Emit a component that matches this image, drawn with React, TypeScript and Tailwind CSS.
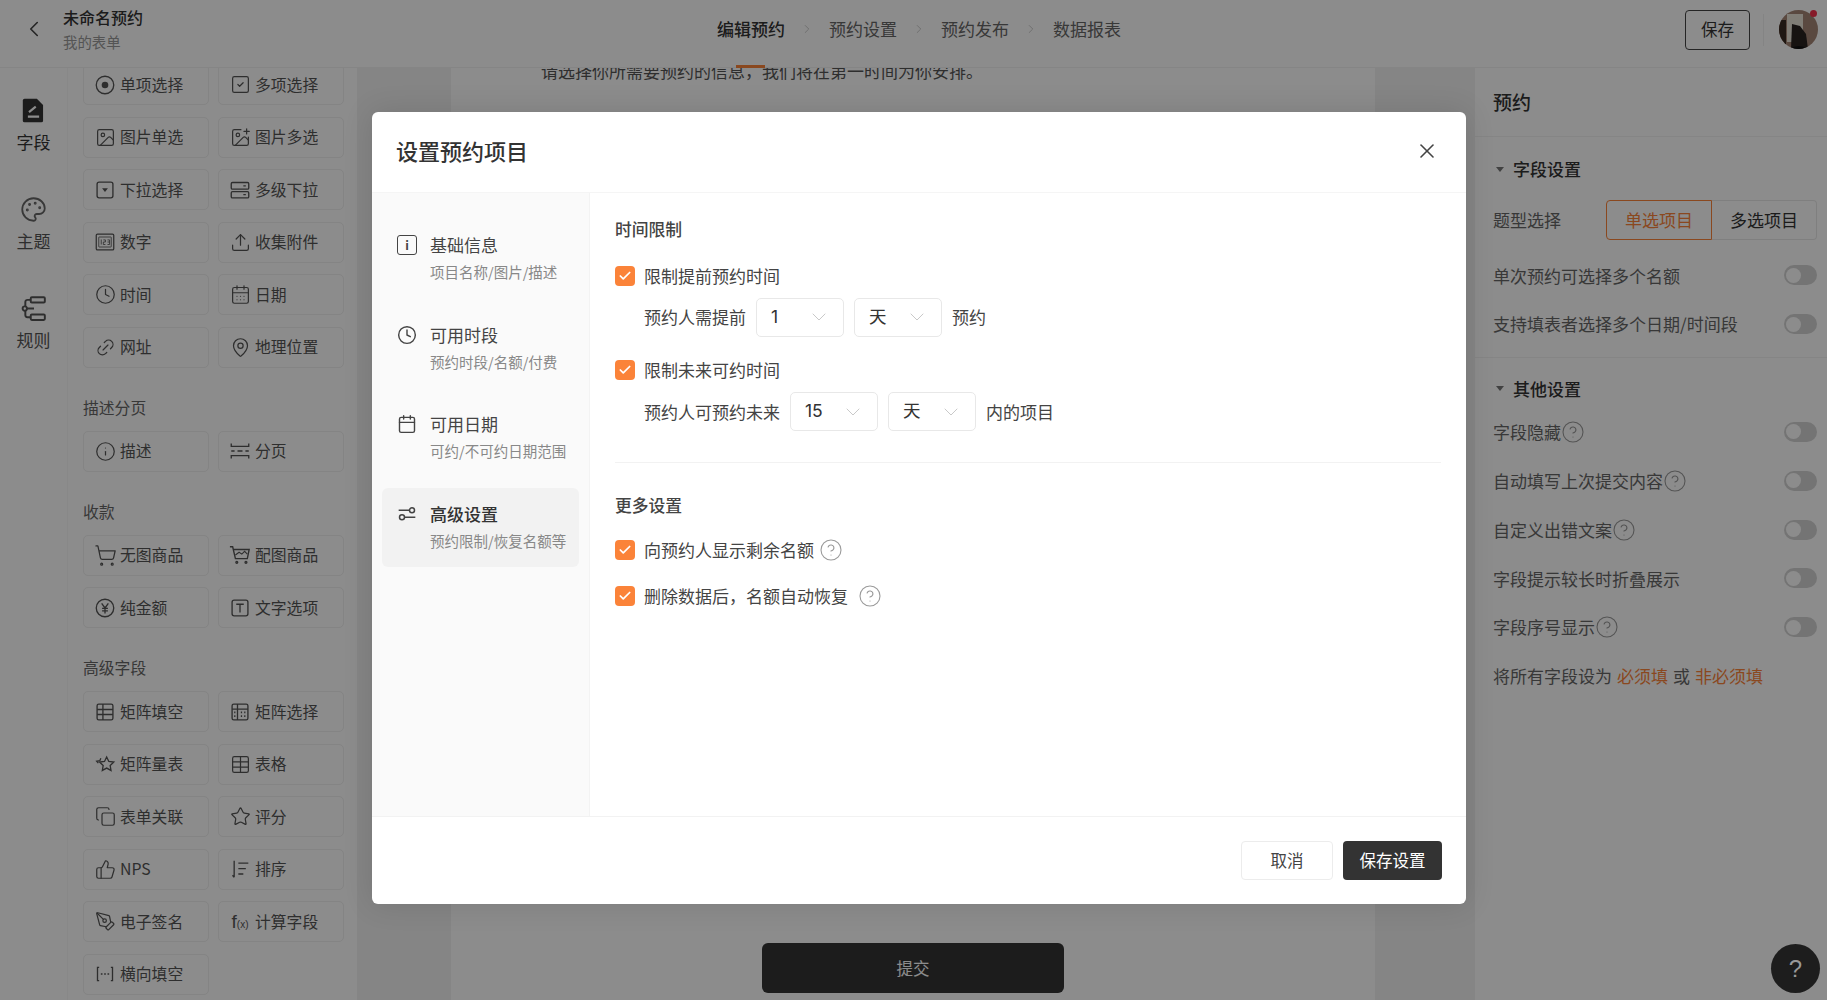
import type { ReactNode } from 'react';
import {
  ChevronLeft, ChevronRight, ChevronDown, X, SquareCheck, Image, ImagePlus,
  Upload, Clock, CalendarDays, Calendar, Link2, MapPin, Info, ShoppingCart,
  Star, Table, Copy, ThumbsUp, PenTool, Check, Palette, CircleHelp,
} from 'lucide-react';

const cn14 = '[font-family:"Noto_Sans_CJK_SC","Liberation_Sans",sans-serif]';
const svgIc = 'w-[20px] h-[20px] shrink-0';

function RadioDot() {
  return (
    <svg viewBox="0 0 24 24" className={svgIc} fill="none" stroke="currentColor" strokeWidth="1.6">
      <circle cx="12" cy="12" r="10.5" />
      <circle cx="12" cy="12" r="4" fill="currentColor" stroke="none" />
    </svg>
  );
}

function DropBox() {
  return (
    <svg viewBox="0 0 24 24" className={svgIc} fill="none" stroke="currentColor" strokeWidth="1.6">
      <rect x="2.5" y="2.5" width="19" height="19" rx="2.5" />
      <path d="M8.5 10h7L12 14.5z" fill="currentColor" stroke="none" />
    </svg>
  );
}

function Rows2() {
  return (
    <svg viewBox="0 0 24 24" className={svgIc} fill="none" stroke="currentColor" strokeWidth="1.6">
      <rect x="1.5" y="3" width="21" height="8" rx="1.5" />
      <rect x="1.5" y="14" width="21" height="7.5" rx="1.5" />
      <path d="M16 7h3M16 17.5h3" />
    </svg>
  );
}

function NumberBox() {
  return (
    <svg viewBox="0 0 24 24" className={svgIc} fill="none" stroke="currentColor" strokeWidth="1.5">
      <rect x="1.5" y="2.5" width="21" height="19" rx="1.5" />
      <rect x="4.5" y="6" width="15" height="12" rx="0.5" strokeWidth="1" />
      <path d="M7.5 9v6M10 9.5h2.5v2.500h-2.500v3h2.500M15 9.500h2.500v5.500H15M15 12h2.500" strokeWidth="1" />
    </svg>
  );
}

function PageBreak() {
  return (
    <svg viewBox="0 0 24 24" className="w-[22px] h-[20px] shrink-0" fill="none" stroke="currentColor" strokeWidth="1.6">
      <path d="M1.500 3v3.500h21V3M1.500 21v-3.500h21V21M1.500 12h4M9 12h6M18.500 12h4" />
    </svg>
  );
}

function YenCircle() {
  return (
    <svg viewBox="0 0 24 24" className={svgIc} fill="none" stroke="currentColor" strokeWidth="1.6">
      <circle cx="12" cy="12" r="10.5" />
      <path d="M8 6.500l4 5.500 4-5.500M12 12v6.500M8.500 12.500h7M8.500 15.500h7" />
    </svg>
  );
}

function TextBox() {
  return (
    <svg viewBox="0 0 24 24" className={svgIc} fill="none" stroke="currentColor" strokeWidth="1.6">
      <rect x="2.500" y="2.500" width="19" height="19" rx="2.500" />
      <path d="M7.500 7.500h9M12 7.500v10" />
    </svg>
  );
}

function MatrixFill() {
  return (
    <svg viewBox="0 0 24 24" className={svgIc} fill="none" stroke="currentColor" strokeWidth="1.6">
      <rect x="2.500" y="2.500" width="19" height="19" rx="2" />
      <path d="M9.500 2.500v19M9.500 9h12M9.500 15h12M2.500 9h7M2.500 15h7" />
    </svg>
  );
}

function MatrixSelect() {
  return (
    <svg viewBox="0 0 24 24" className={svgIc} fill="none" stroke="currentColor" strokeWidth="1.6">
      <rect x="2.500" y="2.500" width="19" height="19" rx="2" />
      <path d="M2.500 8.500h19M9 2.500v19" />
      <path d="M13 12.500h1.500M17 12.500h1.500M13 17h1.500M17 17h1.500M5 12.500h1.500M5 17h1.500" strokeWidth="2" />
    </svg>
  );
}

function ScaleStar() {
  return (
    <svg viewBox="0 0 24 24" className="w-[22px] h-[20px] shrink-0" fill="none" stroke="currentColor" strokeWidth="1.6">
      <path d="M14 3.500l2.600 5.400 5.900.8-4.300 4.100 1 5.900-5.200-2.800-5.200 2.800 1-5.900-4.300-4.100 5.900-.8z" />
      <path d="M7 5L5.800 8 2 8.600l2 2.400" />
    </svg>
  );
}

function SortIcon() {
  return (
    <svg viewBox="0 0 24 24" className={svgIc} fill="none" stroke="currentColor" strokeWidth="1.6">
      <path d="M5 2v20M3 19.500L5 22M10 5h12M10 11.500h9M10 18h6" />
    </svg>
  );
}

function BracketFill() {
  return (
    <svg viewBox="0 0 24 24" className={svgIc} fill="none" stroke="currentColor" strokeWidth="1.6">
      <path d="M5 4H3v16h2M19 4h2v16h-2M7 12h2M11 12h2M15 12h2" />
    </svg>
  );
}

function FormulaIcon() {
  return <span className="text-[19px] leading-none whitespace-nowrap [font-family:'Liberation_Sans',sans-serif]">f<span className="text-[10px]">(x)</span></span>;
}

function ImageCart() {
  return (
    <svg viewBox="0 0 24 24" className="w-[22px] h-[22px] shrink-0" fill="none" stroke="currentColor" strokeWidth="1.5">
      <path d="M1 3h3l3 13h13l2-10H5" />
      <path d="M7 12l4-3 3 2 3-3 3 3" strokeWidth="1.2" />
      <circle cx="8.500" cy="20" r="1" />
      <circle cx="18.500" cy="20" r="1" />
    </svg>
  );
}

function RuleTree() {
  return (
    <svg viewBox="0 0 24 24" className="w-[26px] h-[26px]" fill="none" stroke="currentColor" strokeWidth="1.8">
      <rect x="9" y="2" width="13" height="5" rx="1" />
      <rect x="9" y="18" width="13" height="5" rx="1" />
      <circle cx="3.500" cy="12.500" r="2" />
      <path d="M9 4.500H6a2 2 0 0 0-2 2v4M4 14.500v4a2 2 0 0 0 2 2h3M5.500 12.500H12" />
    </svg>
  );
}

function FieldFile() {
  return (
    <svg viewBox="0 0 24 24" className="w-[27px] h-[27px]" fill="currentColor">
      <path d="M4 1.500h11l5.500 5.500V21a1.500 1.500 0 0 1-1.500 1.500H4A1.500 1.500 0 0 1 2.500 21V3A1.500 1.500 0 0 1 4 1.500z" />
      <path d="M7 17.500h10M8 13.500l6-5" stroke="#fff" strokeWidth="1.900" fill="none" />
    </svg>
  );
}

function Sliders() {
  return (
    <svg viewBox="0 0 24 24" className="w-[22px] h-[22px]" fill="none" stroke="currentColor" strokeWidth="1.8">
      <circle cx="18" cy="7.500" r="3" />
      <circle cx="6" cy="16" r="3" />
      <path d="M2 7.500h13M9 16h13" />
    </svg>
  );
}

const ic = 'w-[21px] h-[21px] shrink-0';

const groups: { title?: string; items: [ReactNode, string][] }[] = [
  {
    items: [
      [<RadioDot />, '单项选择'],
      [<SquareCheck className={ic} strokeWidth={1.4} />, '多项选择'],
      [<Image className={ic} strokeWidth={1.4} />, '图片单选'],
      [<ImagePlus className={ic} strokeWidth={1.4} />, '图片多选'],
      [<DropBox />, '下拉选择'],
      [<Rows2 />, '多级下拉'],
      [<NumberBox />, '数字'],
      [<Upload className={ic} strokeWidth={1.4} />, '收集附件'],
      [<Clock className={ic} strokeWidth={1.4} />, '时间'],
      [<CalendarDays className={ic} strokeWidth={1.4} />, '日期'],
      [<Link2 className={`${ic} -rotate-45`} strokeWidth={1.4} />, '网址'],
      [<MapPin className={ic} strokeWidth={1.4} />, '地理位置'],
    ],
  },
  {
    title: '描述分页',
    items: [
      [<Info className={ic} strokeWidth={1.4} />, '描述'],
      [<PageBreak />, '分页'],
    ],
  },
  {
    title: '收款',
    items: [
      [<ShoppingCart className="w-[23px] h-[23px] shrink-0" strokeWidth={1.3} />, '无图商品'],
      [<ImageCart />, '配图商品'],
      [<YenCircle />, '纯金额'],
      [<TextBox />, '文字选项'],
    ],
  },
  {
    title: '高级字段',
    items: [
      [<MatrixFill />, '矩阵填空'],
      [<MatrixSelect />, '矩阵选择'],
      [<ScaleStar />, '矩阵量表'],
      [<Table className={ic} strokeWidth={1.4} />, '表格'],
      [<Copy className={ic} strokeWidth={1.4} />, '表单关联'],
      [<Star className={ic} strokeWidth={1.4} />, '评分'],
      [<ThumbsUp className={ic} strokeWidth={1.4} />, 'NPS'],
      [<SortIcon />, '排序'],
      [<PenTool className={ic} strokeWidth={1.4} />, '电子签名'],
      [<FormulaIcon />, '计算字段'],
      [<BracketFill />, '横向填空'],
    ],
  },
];

function FieldButton({ icon, label }: { icon: ReactNode; label: string }) {
  return (
    <div className="h-[41px] flex items-center rounded-[5px] border border-[#f0f0f0] bg-white pl-[11px] text-[#555]">
      <span className="w-[20px] flex justify-center shrink-0">{icon}</span>
      <span className="ml-[5px] text-[15.800px] text-[#555] truncate">{label}</span>
    </div>
  );
}

function Toggle() {
  return (
    <span className="w-[33px] h-[20px] rounded-full bg-[#d4d4d4] flex items-center pl-[2px] shrink-0">
      <span className="w-[15px] h-[15px] rounded-full bg-white" />
    </span>
  );
}

function Help() {
  return <CircleHelp className="w-[24px] h-[24px] text-[#9a9a9a] shrink-0" strokeWidth={1.1} />;
}

function SettingRow({ label, help }: { label: string; help?: boolean }) {
  return (
    <div className="h-[48.800px] flex items-center justify-between text-[17px] text-[#666]">
      <span className="flex items-center">{label}{help && <Help />}</span>
      <Toggle />
    </div>
  );
}

function Select({ value }: { value: string }) {
  return (
    <div className="w-[88px] h-[39px] rounded-[5px] border border-[#e8e8e8] flex items-center justify-between pl-[14px] pr-[12px] text-[17.500px] text-[#333]">
      <span className="[font-family:'Inter','Noto_Sans_CJK_SC',sans-serif]">{value}</span>
      <ChevronDown className="w-[24px] h-[24px] text-[#c9c9c9]" strokeWidth={1} />
    </div>
  );
}

function Check2({ label, help }: { label: string; help?: string }) {
  return (
    <div className="flex items-center h-[24px] text-[17px] text-[#444]">
      <span className="w-[20px] h-[20px] rounded-[4px] bg-[#fb8339] flex items-center justify-center">
        <Check className="w-[14px] h-[14px] text-white" strokeWidth={3} />
      </span>
      <span className="ml-[9px]">{label}</span>
      {help && <span className={help}><Help /></span>}
    </div>
  );
}

function NavItem({ icon, title, sub, active }: { icon: ReactNode; title: string; sub: string; active?: boolean }) {
  return (
    <div className={`h-[79px] rounded-[6px] pl-[15px] pt-[14px] flex ${active ? 'bg-[#f2f2f2]' : ''}`}>
      <span className="w-[20px] h-[24px] flex items-center justify-center text-[#444] shrink-0">{icon}</span>
      <div className="ml-[13px]">
        <div className={`text-[17px] leading-[24px] ${active ? 'font-medium text-[#333]' : 'text-[#444]'}`}>{title}</div>
        <div className="text-[14.500px] leading-[20px] mt-[5px] text-[#888]">{sub}</div>
      </div>
    </div>
  );
}

export default function App() {
  return (
    <div className={`relative h-screen overflow-hidden bg-white flex flex-col ${cn14}`}>
      <header className="h-[68px] shrink-0 flex items-center border-b border-[#f2f2f2] relative z-10 bg-white">
        <div className="w-[68px] flex justify-center"><ChevronLeft className="w-[26px] h-[26px] text-[#444] -mt-[9px]" strokeWidth={1.5} /></div>
        <div className="-ml-[5px] w-[643px] -mt-[9px]">
          <div className="text-[16px] leading-[22px] font-medium text-[#333]">未命名预约</div>
          <div className="text-[14.400px] leading-[20px] mt-[4px] text-[#999]">我的表单</div>
        </div>
        <nav className="flex items-center text-[17px] text-[#666] ml-[11px] -mt-[9px]">
          <span className="font-medium text-[#333] relative">编辑预约</span>
          <ChevronRight className="w-[14px] h-[14px] mx-[15px] text-[#bbb]" strokeWidth={1.3} />
          <span>预约设置</span>
          <ChevronRight className="w-[14px] h-[14px] mx-[15px] text-[#bbb]" strokeWidth={1.3} />
          <span>预约发布</span>
          <ChevronRight className="w-[14px] h-[14px] mx-[15px] text-[#bbb]" strokeWidth={1.3} />
          <span>数据报表</span>
        </nav>
        <div className="ml-auto flex items-center pr-[9px] -mt-[8px]">
          <div className="w-[65px] h-[40px] rounded-[4px] border border-[#444] flex items-center justify-center text-[16.500px] text-[#333]">保存</div>
          <div className="w-px h-[32px] bg-[#f0f0f0] ml-[13px] mr-[15px]" />
          <div className="relative w-[39px] h-[39px]">
            <svg viewBox="0 0 39 39" className="w-full h-full rounded-full">
              <rect width="39" height="39" fill="#a58676" />
              <rect x="8" y="4" width="16" height="28" fill="#e9e4d8" />
              <path d="M13 14l8 2 6 8 2 15H12z" fill="#2a2320" />
              <path d="M0 10h7v29H0z" fill="#3a2a22" />
              <path d="M11 39q8-6 18 0z" fill="#111" />
            </svg>
            <span className="absolute right-[1px] top-0 w-[7px] h-[7px] rounded-full bg-[#f5304c]" />
          </div>
        </div>
        <span className="absolute left-[736px] -bottom-px w-[29px] h-[3px] bg-[#fb8339]" />
      </header>

      <main className="flex-1 flex min-h-0">
        <aside className="w-[68px] shrink-0 border-r border-[#f7f7f7] flex flex-col items-center pt-[29px] text-[17px] text-[#555]">
          <div className="h-[99px] flex flex-col items-center text-[#333]"><FieldFile /><span className="mt-[7px] leading-[22px]">字段</span></div>
          <div className="h-[99px] flex flex-col items-center"><Palette className="w-[27px] h-[27px] text-[#666]" strokeWidth={1.6} /><span className="mt-[7px] leading-[22px]">主题</span></div>
          <div className="h-[99px] flex flex-col items-center"><RuleTree /><span className="mt-[8px] leading-[22px]">规则</span></div>
        </aside>

        <section className="w-[290px] shrink-0 overflow-hidden pl-[15px] pr-[13px] border-r border-[#f2f2f2]">
          <div className="-mt-[4px]">
            {groups.map((g, i) => (
              <div key={i}>
                {g.title && <div className="mt-[29px] mb-[12px] h-[22px] leading-[22px] text-[15.800px] text-[#666]">{g.title}</div>}
                <div className="grid grid-cols-2 gap-x-[9px] gap-y-[11.500px]">
                  {g.items.map(([icon, label]) => <FieldButton key={label} icon={icon} label={label} />)}
                </div>
              </div>
            ))}
          </div>
        </section>

        <section className="flex-1 bg-[#f3f3f3] flex overflow-hidden pl-[93px]">
          <div className="w-[924px] bg-white flex flex-col">
            <div className="-mt-[7px] ml-[90px] leading-[20px] text-[17px] text-[#555] whitespace-nowrap">请选择你所需要预约的信息，我们将在第一时间为你安排。</div>
            <div className="mt-auto mb-[7px] ml-[311px] w-[302px] h-[50px] rounded-[6px] bg-[#333] flex items-center justify-center text-[16.500px] text-white">提交</div>
          </div>
        </section>

        <aside className="w-[353px] shrink-0 border-l border-[#f2f2f2] pl-[18px] pr-[10px]">
          <div className="h-[69px] -ml-[18px] -mr-[10px] pl-[18px] flex items-center border-b border-[#f2f2f2] text-[19px] font-medium text-[#333]">预约</div>
          <div className="mt-[21px] flex items-center text-[17px] font-medium text-[#333] h-[22px]">
            <span className="w-0 h-0 ml-[3px] border-x-[4px] border-x-transparent border-t-[5px] border-t-[#777]" />
            <span className="ml-[9px]">字段设置</span>
          </div>
          <div className="mt-[20px] flex items-center justify-between h-[40px]">
            <span className="text-[17px] text-[#666]">题型选择</span>
            <div className="flex h-[40px] text-[17px]">
              <span className="w-[106px] flex items-center justify-center border border-[#fb8339] text-[#fb8339] rounded-l-[4px]">单选项目</span>
              <span className="w-[105px] flex items-center justify-center border border-l-0 border-[#e8e8e8] text-[#333] rounded-r-[4px]">多选项目</span>
            </div>
          </div>
          <div className="mt-[11px]">
            <SettingRow label="单次预约可选择多个名额" />
            <SettingRow label="支持填表者选择多个日期/时间段" />
          </div>
          <div className="-ml-[18px] -mr-[10px] mt-[8px] border-t border-[#f2f2f2]" />
          <div className="mt-[20px] flex items-center text-[17px] font-medium text-[#333] h-[22px]">
            <span className="w-0 h-0 ml-[3px] border-x-[4px] border-x-transparent border-t-[5px] border-t-[#777]" />
            <span className="ml-[9px]">其他设置</span>
          </div>
          <div className="mt-[8px]">
            <SettingRow label="字段隐藏" help />
            <SettingRow label="自动填写上次提交内容" help />
            <SettingRow label="自定义出错文案" help />
            <SettingRow label="字段提示较长时折叠展示" />
            <SettingRow label="字段序号显示" help />
          </div>
          <div className="h-[48.800px] flex items-center text-[17px] text-[#666]">
            将所有字段设为<span className="ml-[5px] text-[#fb8339]">必须填</span><span className="mx-[5px]">或</span><span className="text-[#fb8339]">非必须填</span>
          </div>
        </aside>
      </main>

      {/* mask + modal */}
      <div className="absolute inset-0 bg-black/45 z-20 pl-[372px] pt-[112px]">
        <div className="w-[1094px] h-[792px] rounded-[6px] bg-white flex flex-col shadow-[0_0_30px_rgba(0,0,0,0.12)] overflow-hidden">
          <div className="h-[81px] shrink-0 flex items-center justify-between pl-[24px] pr-[27px] border-b border-[#f5f5f5]">
            <span className="text-[22px] font-medium text-[#333] -mt-[3px]">设置预约项目</span>
            <X className="w-[24px] h-[24px] text-[#444] -mt-[3px]" strokeWidth={1.6} />
          </div>
          <div className="flex-1 flex min-h-0">
            <div className="w-[218px] shrink-0 bg-[#fafafa] border-r border-[#f3f3f3] px-[10px] pt-[26px] flex flex-col gap-[10.700px]">
              <NavItem icon={<span className="flex w-[20px] h-[20px] items-center justify-center rounded-[3px] border-[1.600px] border-[#444]"><span className="text-[12px] leading-none font-bold">i</span></span>} title="基础信息" sub="项目名称/图片/描述" />
              <NavItem icon={<Clock className="w-[22px] h-[22px]" strokeWidth={1.7} />} title="可用时段" sub="预约时段/名额/付费" />
              <NavItem icon={<Calendar className="w-[22px] h-[22px]" strokeWidth={1.7} />} title="可用日期" sub="可约/不可约日期范围" />
              <NavItem active icon={<Sliders />} title="高级设置" sub="预约限制/恢复名额等" />
            </div>
            <div className="flex-1 pl-[25px] pr-[25px] pt-[24px]">
              <div className="text-[16.800px] leading-[24px] font-medium text-[#444]">时间限制</div>
              <div className="mt-[22.500px]"><Check2 label="限制提前预约时间" /></div>
              <div className="mt-[10px] ml-[29px] flex items-center text-[17px] text-[#444] gap-[10px]">
                <span>预约人需提前</span>
                <Select value="1" />
                <Select value="天" />
                <span>预约</span>
              </div>
              <div className="mt-[21.500px]"><Check2 label="限制未来可约时间" /></div>
              <div className="mt-[10px] ml-[29px] flex items-center text-[17px] text-[#444] gap-[10px]">
                <span>预约人可预约未来</span>
                <Select value="15" />
                <Select value="天" />
                <span>内的项目</span>
              </div>
              <div className="mt-[31px] border-t border-[#f2f2f2]" />
              <div className="mt-[30px] text-[16.800px] leading-[24px] font-medium text-[#444]">更多设置</div>
              <div className="mt-[21px]"><Check2 label="向预约人显示剩余名额" help="ml-[5px]" /></div>
              <div className="mt-[22px]"><Check2 label="删除数据后，名额自动恢复" help="ml-[10px]" /></div>
            </div>
          </div>
          <div className="h-[88px] shrink-0 border-t border-[#f2f2f2] flex items-start justify-end gap-[10px] pr-[24px] pt-[24px]">
            <span className="w-[92px] h-[39px] rounded-[4px] border border-[#ececec] flex items-center justify-center text-[16.500px] text-[#444]">取消</span>
            <span className="w-[99px] h-[39px] rounded-[4px] bg-[#333] flex items-center justify-center text-[16.500px] text-white">保存设置</span>
          </div>
        </div>
      </div>

      {/* help button sits above the mask */}
      <div className="absolute right-[7px] bottom-[7px] w-[49px] h-[49px] rounded-full bg-[#1d1d1d] z-30 flex items-center justify-center text-[24px] text-[#999] [font-family:'Liberation_Sans',sans-serif]">?</div>
    </div>
  );
}
